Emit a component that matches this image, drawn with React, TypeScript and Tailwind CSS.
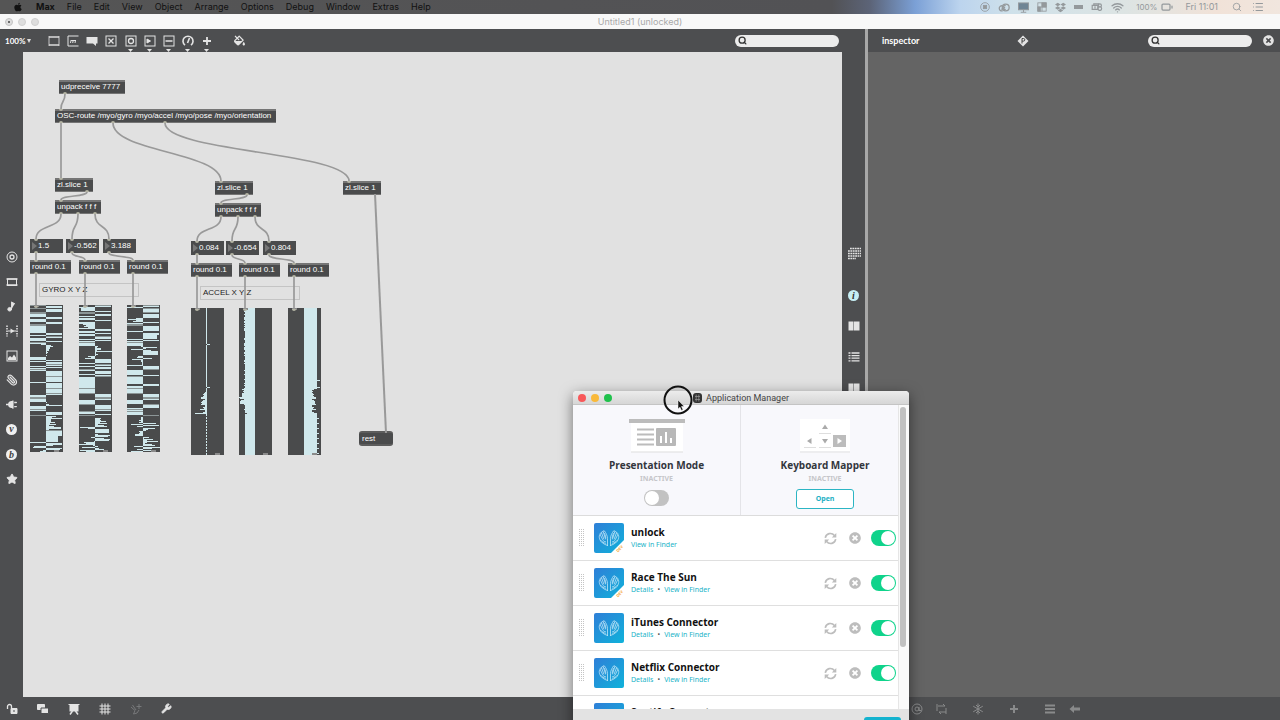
import React, { useState } from 'react';
import { Battery, List, Music2, Paperclip, Search, Star, Wifi, Wrench } from 'lucide-react';
import { FaApple, FaDropbox, FaFillDrip, FaPlug, FaTimesCircle } from 'react-icons/fa';

type IconProps = { children: React.ReactNode; label: string; arrow?: boolean };

interface PatchBox {
  text: string;
  x: number;
  y: number;
  w: number;
}

interface AppEntry {
  name: string;
  dev?: boolean;
  details?: boolean;
}

const MENUS = ['File', 'Edit', 'View', 'Object', 'Arrange', 'Options', 'Debug', 'Window', 'Extras', 'Help'];

const APPS: AppEntry[] = [
  { name: 'unlock', dev: true },
  { name: 'Race The Sun', dev: true, details: true },
  { name: 'iTunes Connector', details: true },
  { name: 'Netflix Connector', details: true },
  { name: 'Spotify Connector', details: true },
];

// Patcher objects, in canvas coordinates
const BOXES: PatchBox[] = [
  { text: 'udpreceive 7777', x: 36, y: 28, w: 66 },
  { text: 'OSC-route /myo/gyro /myo/accel /myo/pose /myo/orientation', x: 32, y: 57, w: 221 },
  { text: 'zl.slice 1', x: 32, y: 126, w: 38 },
  { text: 'unpack f f f', x: 32, y: 148, w: 46 },
  { text: 'round 0.1', x: 7, y: 208, w: 41 },
  { text: 'round 0.1', x: 56, y: 208, w: 41 },
  { text: 'round 0.1', x: 104, y: 208, w: 41 },
  { text: 'zl.slice 1', x: 192, y: 129, w: 38 },
  { text: 'unpack f f f', x: 192, y: 151, w: 46 },
  { text: 'round 0.1', x: 168, y: 211, w: 41 },
  { text: 'round 0.1', x: 216, y: 211, w: 41 },
  { text: 'round 0.1', x: 265, y: 211, w: 41 },
  { text: 'zl.slice 1', x: 320, y: 129, w: 38 },
];

const NUMBERS: PatchBox[] = [
  { text: '1.5', x: 7, y: 187, w: 33 },
  { text: '-0.562', x: 43, y: 187, w: 33 },
  { text: '3.188', x: 80, y: 187, w: 33 },
  { text: '0.084', x: 168, y: 189, w: 33 },
  { text: '-0.654', x: 203, y: 189, w: 33 },
  { text: '0.804', x: 240, y: 189, w: 33 },
];

// x1, y1, x2, y2
const CORDS: number[][] = [
  [42, 42, 38, 57],
  [38, 71, 38, 126],
  [90, 71, 198, 129],
  [142, 71, 326, 129],
  [64, 140, 38, 148],
  [38, 162, 13, 187],
  [55, 162, 49, 187],
  [72, 162, 86, 187],
  [13, 201, 13, 208],
  [49, 201, 62, 208],
  [86, 201, 110, 208],
  [13, 222, 13, 254],
  [62, 222, 62, 254],
  [110, 222, 110, 254],
  [224, 143, 198, 151],
  [198, 165, 174, 189],
  [215, 165, 209, 189],
  [232, 165, 246, 189],
  [174, 203, 174, 211],
  [209, 203, 222, 211],
  [246, 203, 271, 211],
  [174, 225, 174, 257],
  [222, 225, 222, 257],
  [271, 225, 271, 257],
];

const cordPath = ([x1, y1, x2, y2]: number[]) => {
  const d = Math.min((y2 - y1) * 0.6, 29);
  return `M${x1} ${y1} C${x1} ${y1 + d} ${x2} ${y2 - d} ${x2} ${y2}`;
};

const noise = (seed: number) => {
  const v = Math.sin(seed * 12.9898) * 43758.5453;
  return v - Math.floor(v);
};

const HISTORY = 147;

// Long runs in the gyro history: [from, to, value]
const RUNS: number[][][] = [
  [[23, 27, -16], [33, 36, -16], [40, 43, 4], [44, 52, 2], [52, 55, -16], [57, 61, 16], [63, 65, -16], [69, 77, 16], [79, 89, 16], [90, 97, -16], [97, 100, 3], [101, 106, -16], [114, 122, 5], [125, 131, 16], [131, 137, 12]],
  [[3, 6, -14], [19, 23, -8], [24, 26, 16], [37, 41, -16], [42, 46, 4], [47, 51, 5], [54, 58, 16], [64, 66, -16], [72, 89, -16], [89, 95, 16], [96, 98, -16], [101, 105, 16], [106, 109, -16], [113, 122, 6], [124, 128, 14]],
  [[4, 8, 16], [13, 17, -8], [21, 25, 16], [30, 34, 14], [36, 41, -16], [47, 50, 15], [55, 60, -4], [61, 65, 16], [66, 69, -16], [72, 79, -16], [80, 81, 16], [83, 89, -16], [89, 95, 16], [95, 98, -16], [99, 103, 16], [104, 109, -16], [111, 118, -2], [122, 126, 8], [127, 132, -5]],
];

const gyroHistory = (axis: number) =>
  Array.from({ length: HISTORY }, (_, i) => {
    const run = RUNS[axis].find(([from, to]) => i >= from && i < to);
    if (run) return Math.abs(run[2]) < 10 ? run[2] * (noise(i + axis) * 2) : run[2];
    const r = noise(i * 2.3 + axis * 17 + 5);
    const busy = i > 110 || (i > 38 && i < 55);
    if (r < 0.08) return 0;
    if (busy) return (r - 0.52) * 36;
    return r > 0.52 ? 16 : -16;
  });

const ACCEL: number[][] = [
  Array.from({ length: HISTORY }, (_, i) => {
    if (i === 36 || i === 79) return 3;
    if (i === 105) return -12;
    if (i > 83 && i < 106) return -2 - Math.floor(noise(i) * (i / 18));
    return i > 106 && i % 3 === 0 ? 0 : -1;
  }),
  Array.from({ length: HISTORY }, (_, i) => {
    if (i > 80 && i < 96) return -11 - Math.floor(noise(i) * 6);
    if (i === 105) return -8;
    if (i < 105) return noise(i) > 0.5 ? -11 : -10;
    return -10;
  }),
  Array.from({ length: HISTORY }, (_, i) => {
    if (i > 80 && i < 105) return 8 + Math.floor(noise(i) * 5);
    if (i === 72 || i === 79) return 16;
    if (i > 106 && i % 5 === 0) return 15;
    return 13;
  }),
];

const Cell: React.FC<IconProps> = ({ children, label, arrow }) => (
  <button aria-label={label} className="relative flex h-4 w-[19px] items-center justify-center text-[#e4e4e4]">
    {children}
    {arrow && (
      <svg className="absolute top-4 h-[3px] w-[5px]" viewBox="0 0 5 3">
        <path d="M0 0h5L2.500 3z" fill="currentColor" />
      </svg>
    )}
  </button>
);

const Glyph: React.FC<{ children: React.ReactNode; size?: string }> = ({ children, size = 'size-3' }) => (
  <svg viewBox="0 0 12 12" className={size} fill="none" stroke="currentColor" strokeWidth="1">
    {children}
  </svg>
);

const SearchField: React.FC<{ label: string }> = ({ label }) => (
  <label className="flex h-3 w-[104px] items-center rounded-full bg-[#ececec] pl-[3px]">
    <Search className="size-[9px] text-[#333]" strokeWidth={3.5} />
    <input type="search" aria-label={label} className="h-3 w-20 bg-transparent text-[8px] outline-none" />
  </label>
);

const MenuBar = () => (
  <header className="flex h-[14px] shrink-0 items-center justify-between bg-[linear-gradient(90deg,#555_0%,#525255_65%,#5c6478_68%,#7ba0d6_71.500%,#bcd4ee_75%,#cfe1ea_79%,#dde4e3_88%,#f1e2d8_95%,#f1e6de_100%)] pr-4 pl-[13px] font-['Inter',sans-serif] text-[9px] leading-[14px] text-[#111]">
    <nav className="flex items-center gap-3">
      <FaApple className="mr-px size-[10px]" />
      <button className="font-bold">Max</button>
      {MENUS.map((menu) => (
        <button key={menu}>{menu}</button>
      ))}
    </nav>
    <div className="flex items-center text-[#94999c]">
      <div className="flex items-center gap-2">
        <Glyph size="size-[10px]">
          <circle cx="6" cy="6" r="5.200" />
          <rect x="4" y="4" width="4" height="4" fill="currentColor" />
        </Glyph>
        <svg viewBox="0 0 14 10" className="h-[9px] w-3" fill="none" stroke="currentColor" strokeWidth="1.500">
          <circle cx="9" cy="5" r="4" />
          <path d="M9 7a2.200 2.200 0 1 1 0-4M5.500 9H4a3 3 0 1 1 1-6M4 6.500c1 1 3 0 4-2" />
        </svg>
        <Glyph size="size-[11px]">
          <rect x="0.500" y="1" width="11" height="7.500" fill="#6f8595" />
          <path d="M6 8v3M3 11.200h6" />
        </Glyph>
        <Glyph size="size-[10px]">
          <rect x="1" y="1" width="10" height="10" />
          <path d="M1 6h10M6 1v10" />
          <rect x="6" y="1" width="5" height="5" fill="currentColor" />
          <rect x="1" y="6" width="3" height="5" fill="currentColor" />
        </Glyph>
        <FaDropbox className="size-[11px]" />
        <span className="h-1 w-[9px] bg-current" />
        <svg viewBox="0 0 14 10" className="h-2 w-3" fill="none" stroke="currentColor" strokeWidth="1.500">
          <path d="M1 3h7v5H1zM3 3V1h6v2M4.500 4v3" />
          <circle cx="10.500" cy="3" r="2" />
          <circle cx="10.500" cy="7" r="2.300" />
        </svg>
        <Wifi className="size-[13px]" strokeWidth={2.5} />
      </div>
      <span className="ml-3 text-[8px]">100%</span>
      <Battery className="ml-0.5 h-3 w-4" strokeWidth={2.5} />
      <span className="ml-[10px]">Fri 11:01</span>
      <Search className="ml-[14px] size-[10px]" strokeWidth={2} />
      <List className="ml-[10px] size-3" strokeWidth={2} />
    </div>
  </header>
);

const TitleBar = () => (
  <div className="flex h-[15px] shrink-0 items-center bg-[#f8f8f8] px-[5px] font-['Inter',sans-serif]">
    <div className="flex flex-1 gap-[5px]">
      <button aria-label="Close" className="flex size-2 items-center justify-center rounded-full border border-[#c4c4c4] bg-[#dedede]">
        <span className="size-0.5 rounded-full bg-[#444]" />
      </button>
      <button aria-label="Minimize" className="size-2 rounded-full border border-[#d0d0d0] bg-[#dedede]" />
      <button aria-label="Zoom" className="size-2 rounded-full border border-[#d0d0d0] bg-[#dedede]" />
    </div>
    <h1 className="text-[9px] leading-3 text-[#a9a9a9]">Untitled1 (unlocked)</h1>
    <div className="flex-1" />
  </div>
);

const Toolbar = () => (
  <div className="flex h-[23px] shrink-0 items-center pr-[26px] pl-[5px]">
    <label className="flex w-[39px] items-center">
      <select aria-label="Zoom level" className="w-[22px] appearance-none bg-transparent font-['Lato',sans-serif] text-[8px] font-bold text-white">
        <option>100%</option>
      </select>
      <svg viewBox="0 0 4 4" className="size-1">
        <path d="M0 0h4L2 4z" fill="#ddd" />
      </svg>
    </label>
    <Cell label="Object">
      <Glyph>
        <path d="M1 1v10M11 1v10" strokeOpacity="0.800" />
        <path d="M1 2h10M1 10h10" strokeWidth="1.800" strokeOpacity="0.700" />
      </Glyph>
    </Cell>
    <Cell label="Message">
      <Glyph>
        <path d="M11.500 1H1v10h10.500" />
        <path d="M3.500 8l.6-3M5.700 8l.6-3M8 8l.6-3M4.100 5.500h4.500" />
      </Glyph>
    </Cell>
    <Cell label="Comment">
      <Glyph>
        <path d="M.5 2h11v6.500H10V11L7 8.500H.5z" fill="currentColor" stroke="none" />
      </Glyph>
    </Cell>
    <Cell label="Toggle">
      <Glyph>
        <rect x="1" y="1" width="10" height="10" />
        <path d="M3.500 3.500l5 5M8.500 3.500l-5 5" strokeWidth="1.300" />
      </Glyph>
    </Cell>
    <div className="ml-px flex">
      <Cell label="Button" arrow>
        <Glyph>
          <rect x="1" y="1" width="10" height="10" />
          <circle cx="6" cy="6" r="2.500" strokeWidth="1.300" />
        </Glyph>
      </Cell>
      <Cell label="Number" arrow>
        <Glyph>
          <rect x="1" y="1" width="10" height="10" />
          <path d="M3 4l3.500 2L3 8z" fill="currentColor" />
        </Glyph>
      </Cell>
      <Cell label="Slider" arrow>
        <Glyph>
          <rect x="1" y="1" width="10" height="10" />
          <path d="M2.500 6h7" strokeWidth="1.500" />
        </Glyph>
      </Cell>
      <Cell label="Dial" arrow>
        <Glyph>
          <path d="M3 10.200a5 5 0 1 1 6 0M5.500 8l2-5" strokeWidth="1.600" />
        </Glyph>
      </Cell>
      <Cell label="Add" arrow>
        <Glyph>
          <path d="M6 2v8M2 6h8" strokeWidth="1.800" />
        </Glyph>
      </Cell>
    </div>
    <div className="ml-[14px]">
      <Cell label="Fill colour">
        <FaFillDrip className="size-[11px]" />
      </Cell>
    </div>
    <div className="flex-1" />
    <SearchField label="Search patcher" />
  </div>
);

const LeftRail = () => (
  <nav className="mt-[197px] flex h-[238px] w-[23px] shrink-0 flex-col items-center justify-between">
    <Cell label="Objects">
      <Glyph>
        <circle cx="6" cy="6" r="5" />
        <circle cx="6" cy="6" r="2" strokeWidth="1.300" />
      </Glyph>
    </Cell>
    <Cell label="Modules">
      <Glyph>
        <rect x="1.500" y="3" width="9" height="6.500" />
        <path d="M.5 3h11M.5 9h11" strokeWidth="1.600" />
      </Glyph>
    </Cell>
    <Cell label="Audio">
      <Music2 className="size-[11px]" fill="currentColor" />
    </Cell>
    <Cell label="Video">
      <Glyph>
        <path d="M1 .5v11M11 .5v11" strokeWidth="1.500" strokeDasharray="1.500 1" />
        <path d="M4.500 3.500L8.500 6l-4 2.500z" fill="currentColor" stroke="none" />
        <path d="M2 6h8" />
      </Glyph>
    </Cell>
    <Cell label="Images">
      <Glyph>
        <rect x="1" y="1" width="10" height="10" />
        <path d="M2 10V8l2-2 2 1.500L8 4.500l2 3V10z" fill="currentColor" stroke="none" />
      </Glyph>
    </Cell>
    <Cell label="Clippings">
      <Paperclip className="size-3 -scale-x-100" strokeWidth={2.5} />
    </Cell>
    <Cell label="Plug-ins">
      <FaPlug className="size-[11px] rotate-90" />
    </Cell>
    <Cell label="Vizzie">
      <span className="size-[11px] rounded-full bg-[#f0f0f0] text-center font-['Liberation_Serif',serif] text-[10px] leading-[10px] font-bold text-[#444] italic">v</span>
    </Cell>
    <Cell label="Beap">
      <span className="size-[11px] rounded-full bg-[#f0f0f0] text-center font-['Liberation_Serif',serif] text-[10px] leading-[11px] font-bold text-[#444] italic">b</span>
    </Cell>
    <Cell label="Favourites">
      <Star className="size-3" fill="currentColor" />
    </Cell>
  </nav>
);

const BookIcon = () => (
  <Glyph>
    <path d="M.5 1.500h5v9h-5zM6 1.500h5.500v9H6z" fill="currentColor" stroke="none" />
  </Glyph>
);

const RightRail = () => (
  <nav className="flex w-[23px] shrink-0 flex-col items-center gap-[15px] pt-[194px]">
    <div className="mb-[10px]">
      <Cell label="Matrix">
        <svg viewBox="0 0 14 14" className="size-[14px]" stroke="currentColor" strokeWidth="1.700" strokeDasharray="1.800 0.600">
          <path d="M3 1.500h11M1 4h13M1 6.500h13M1 9h13M1 11.500h8" />
        </svg>
      </Cell>
    </div>
    <Cell label="Inspector">
      <span className="size-[11px] rounded-full bg-[#c6eff5] text-center font-['Liberation_Serif',serif] text-[10px] leading-[11px] font-bold text-[#333] italic">i</span>
    </Cell>
    <Cell label="Reference">
      <BookIcon />
    </Cell>
    <Cell label="Console">
      <Glyph>
        <path d="M.5 2h2M3.500 2h8M.5 4.600h2M3.500 4.600h8M.5 7.200h2M3.500 7.200h8M.5 9.800h2M3.500 9.800h8" strokeWidth="1.300" />
      </Glyph>
    </Cell>
    <Cell label="Lessons">
      <BookIcon />
    </Cell>
  </nav>
);

const MultiSlider: React.FC<{ values: number[]; x: string }> = ({ values, x }) => (
  <svg className={`absolute h-[147px] w-[33px] ${x}`} viewBox="0 0 33 147" shapeRendering="crispEdges">
    <rect width="33" height="147" fill="#4a4b4c" />
    {values.map((v, i) => (
      <rect
        key={i}
        x={v < 0 ? 16 + v : 16}
        y={i}
        width={Math.abs(v)}
        height="1"
        fill={noise(i * 5 + 1) > 0.85 && Math.abs(v) === 16 ? '#8c9697' : '#d0e8ec'}
      />
    ))}
    <path d="M4 0h5v2H4zM24 145h5v2h-5z" fill="#8a8a8a" />
  </svg>
);

// The canvas is free-form: every object sits where the user dropped it
const PatcherCanvas = () => (
  <main className="relative min-w-0 flex-1 overflow-hidden bg-[#e1e1e1] font-['Liberation_Sans',sans-serif] text-[8px] leading-[10px]">
    <MultiSlider values={gyroHistory(0)} x="left-[7px] top-[253px]" />
    <MultiSlider values={gyroHistory(1)} x="left-[56px] top-[253px]" />
    <MultiSlider values={gyroHistory(2)} x="left-[104px] top-[253px]" />
    <MultiSlider values={ACCEL[0]} x="left-[168px] top-[256px]" />
    <MultiSlider values={ACCEL[1]} x="left-[216px] top-[256px]" />
    <MultiSlider values={ACCEL[2]} x="left-[265px] top-[256px]" />
    <p className="absolute top-[231px] left-4 h-[14px] w-[100px] border border-[#c4c4c4] px-0.5 py-px text-[#222]">GYRO X Y Z</p>
    <p className="absolute top-[234px] left-[177px] h-[14px] w-[100px] border border-[#c4c4c4] px-0.5 py-px text-[#222]">ACCEL X Y Z</p>
    {BOXES.map((box) => (
      <div
        key={`${box.x}-${box.y}`}
        className="absolute h-[14px] border-t-2 border-b border-[#757575] bg-[#4a4b4c] pl-0.5 whitespace-nowrap text-white"
        style={{ left: box.x, top: box.y, width: box.w }}
      >
        {box.text}
      </div>
    ))}
    {NUMBERS.map((box) => (
      <div
        key={`${box.x}-${box.y}`}
        className="absolute flex h-[14px] items-center bg-[#4a4b4c] pl-0.5"
        style={{ left: box.x, top: box.y, width: box.w }}
      >
        <svg viewBox="0 0 5 8" className="h-2 w-[5px] shrink-0">
          <path d="M0 0l5 4-5 4z" fill="#777" />
        </svg>
        <input aria-label="Number" defaultValue={box.text} className="w-[25px] bg-transparent pl-px text-[8px] leading-[10px] text-white outline-none" />
      </div>
    ))}
    <button className="absolute top-[379px] left-[336px] h-[15px] w-[34px] rounded-[3px] border-y-2 border-[#5c5c5c] bg-[#4a4b4c] pl-[3px] text-left text-white">
      rest
    </button>
    <svg className="pointer-events-none absolute inset-0 size-full" fill="none">
      {CORDS.map((cord) => (
        <path key={cord.join()} d={cordPath(cord)} stroke="#999" strokeWidth="1.700" />
      ))}
      <path d="M352 142L363 381" stroke="#999" strokeWidth="2" />
      {CORDS.map(([x1, y1, x2, y2]) => (
        <path key={`${x1}-${y1}-${x2}`} d={`M${x1 - 2} ${y1}a2 2 0 0 1 4 0M${x2 - 2} ${y2}a2 2 0 0 0 4 0`} fill="#b5b5a5" />
      ))}
    </svg>
  </main>
);

const PatcherFooter = () => (
  <footer className="flex h-[23px] shrink-0 items-center gap-3 pl-0.5">
    <Cell label="Unlock">
      <Glyph>
        <path d="M5 5.500h6v5H5z" fill="currentColor" />
        <path d="M1.500 6V3.500a2 2 0 0 1 4 0V5" strokeWidth="1.300" />
        <path d="M8 7v2" stroke="#4d4e50" />
      </Glyph>
    </Cell>
    <Cell label="Patching mode">
      <Glyph>
        <path d="M.5 1.500h7v5h-7z" fill="currentColor" />
        <path d="M4 5h7.500v5.500H4z" fill="currentColor" stroke="#4d4e50" />
      </Glyph>
    </Cell>
    <Cell label="Presentation">
      <Glyph>
        <path d="M.5 1h11v1h-1v6.500h-9V2h-1z" fill="currentColor" stroke="none" />
        <path d="M4.500 8L2 11.500M7.500 8L10 11.500" strokeWidth="1.500" />
      </Glyph>
    </Cell>
    <Cell label="Grid">
      <Glyph>
        <path d="M3 .5v11M6 .5v11M9 .5v11M.5 3h11M.5 6h11M.5 9h11" />
      </Glyph>
    </Cell>
    <Cell label="Snap">
      <Glyph>
        <path d="M1 4l4 3.500M2.500 2l3.500 5M5 7.500L3.500 11 7 10l2-3M9 1v5M6.500 3.500h5" stroke="#77787a" />
      </Glyph>
    </Cell>
    <Cell label="Tools">
      <Wrench className="size-[11px]" fill="currentColor" />
    </Cell>
  </footer>
);

const Inspector = () => (
  <aside className="flex w-[412px] shrink-0 flex-col bg-[#646464]">
    <div className="flex h-[23px] items-center bg-[#4d4e50] pr-0.5 pl-[14px]">
      <h2 className="w-[131px] font-['Lato',sans-serif] text-[9px] leading-3 font-bold text-white">inspector</h2>
      <Cell label="Parameters">
        <Glyph>
          <path d="M6 .5L11.500 6 6 11.500.5 6z" fill="currentColor" stroke="none" />
          <path d="M5 8.500v-5h1.500a1.300 1.300 0 0 1 0 2.600H5" stroke="#444" />
        </Glyph>
      </Cell>
      <div className="flex-1" />
      <SearchField label="Search inspector" />
      <div className="ml-[7px]">
        <Cell label="Close inspector">
          <FaTimesCircle className="size-[11px]" />
        </Cell>
      </div>
    </div>
    <div className="flex-1" />
    <footer className="flex h-[23px] items-center bg-[#4d4e50] pl-[39px]">
      <div className="flex gap-[17px] opacity-40">
        <Cell label="Attribute">
          <Glyph>
            <circle cx="6" cy="6" r="5" />
            <circle cx="6" cy="6" r="2" />
            <path d="M8 4v3.500h2" />
          </Glyph>
        </Cell>
        <div className="-ml-[11px]">
          <Cell label="Reorder">
            <Glyph>
              <path d="M1 1v7M2 3h7L7 1M10 5v6M10 9H3l2 2" />
            </Glyph>
          </Cell>
        </div>
        <Cell label="Freeze">
          <Glyph>
            <path d="M6 .5v11M1.200 3.200l9.600 5.600M10.800 3.200L1.200 8.800M4 2l2 2 2-2M4 10l2-2 2 2" />
          </Glyph>
        </Cell>
        <Cell label="Add attribute">
          <Glyph>
            <path d="M6 2v8M2 6h8" strokeWidth="2" />
          </Glyph>
        </Cell>
        <Cell label="Show list">
          <Glyph>
            <path d="M1 2.500h10M1 6h10M1 9.500h10" strokeWidth="1.800" />
          </Glyph>
        </Cell>
        <div className="-ml-[11px]">
          <Cell label="Back">
            <Glyph>
              <path d="M.5 6L5 2v2.500h6v3H5V10z" fill="currentColor" stroke="none" />
            </Glyph>
          </Cell>
        </div>
      </div>
    </footer>
  </aside>
);

const Switch: React.FC<{ label: string; on?: boolean }> = ({ label, on = false }) => {
  const [checked, setChecked] = useState(on);
  return (
    <input
      type="checkbox"
      role="switch"
      aria-label={label}
      checked={checked}
      onChange={() => setChecked(!checked)}
      className="relative h-4 w-[25px] shrink-0 appearance-none rounded-full bg-[#c2c2c2] before:absolute before:top-px before:left-px before:size-[14px] before:rounded-full before:bg-white checked:bg-[#0fd38b] checked:before:left-[10px]"
    />
  );
};

const AppTile: React.FC<{ dev?: boolean; id: number }> = ({ dev, id }) => (
  <svg viewBox="0 0 30 30" className="size-[30px] shrink-0">
    <defs>
      <linearGradient id={`tile-${id}`} x1="0" y1="0" x2="1" y2="1">
        <stop offset="0" stopColor="#2f7fd8" />
        <stop offset="1" stopColor="#0fb2da" />
      </linearGradient>
    </defs>
    <path
      d={dev ? 'M2 0h26a2 2 0 0 1 2 2v15L17 30H2a2 2 0 0 1-2-2V2a2 2 0 0 1 2-2z' : 'M2 0h26a2 2 0 0 1 2 2v26a2 2 0 0 1-2 2H2a2 2 0 0 1-2-2V2a2 2 0 0 1 2-2z'}
      fill={`url(#tile-${id})`}
    />
    <g fill="none" stroke="#d4effb" strokeWidth="0.700" strokeLinecap="round">
      <path
        id={`wing-${id}`}
        d="M13.500 22.500V15.500c0-3-1.700-5.500-3-7.500-.7-.8-1.600-.2-1.300.6l2 6.400M9 8.800c-.9-.5-1.700 0-1.500.9l2.300 6.300M7.400 10c-1-.2-1.600.5-1.300 1.400l2.500 5.100M6 11.500c-1 .7-.9 2.700-.4 4.300.9 3.500 4 5.300 7.900 6.700M7 17.500c1 1.500 2.800 2.500 4.500 2.800M9 17.500c.5.700 1.500 1.200 2.500 1.300M10.500 10.500c1 2 1.300 3.500 1.200 5.500"
      />
      <use href={`#wing-${id}`} transform="translate(30 0) scale(-1 1)" />
    </g>
    {dev && (
      <text x="26" y="27" fontSize="4" fontWeight="700" fill="#f5a93c" textAnchor="middle" transform="rotate(-45 26 26)">
        DEV
      </text>
    )}
  </svg>
);

const AppRow: React.FC<{ app: AppEntry; id: number }> = ({ app, id }) => (
  <li className="flex h-[45px] items-center border-b border-[#dfdfdf] pr-0.5 pl-1.5">
    <svg viewBox="0 0 6 18" className="mr-[9px] h-[18px] w-1.5 shrink-0" stroke="#c4c4c4" strokeDasharray="1 1" shapeRendering="crispEdges">
      <path d="M.5 0v18M2.500 0v18M4.500 0v18" />
    </svg>
    <AppTile dev={app.dev} id={id} />
    <div className="ml-[7px] min-w-0 flex-1 pt-0.5">
      <h3 className="text-[10px] leading-3 font-bold text-[#111]">{app.name}</h3>
      <p className="flex gap-1 font-['Noto_Sans',sans-serif] text-[7px] leading-[14px] text-[#22b3c8]">
        {app.details && (
          <>
            <a href="#details">Details</a>
            <span className="text-[#555]">•</span>
          </>
        )}
        <a href="#finder">View in Finder</a>
      </p>
    </div>
    <button aria-label={`Reload ${app.name}`} className="mr-3 text-[#bdbdbd]">
      <svg viewBox="0 0 13 13" className="size-[13px]" fill="none" stroke="currentColor" strokeWidth="1.600">
        <path d="M1.300 5.800A5.100 5.100 0 0 1 10.400 3.500M11.700 7.200A5.100 5.100 0 0 1 2.600 9.500" />
        <path d="M12.300 1v4.500H7.800zM.7 12V7.500h4.500z" fill="currentColor" stroke="none" />
      </svg>
    </button>
    <button aria-label={`Remove ${app.name}`} className="mr-[10px] text-[#bdbdbd]">
      <FaTimesCircle className="size-3" />
    </button>
    <Switch label={`Enable ${app.name}`} on />
  </li>
);

const ApplicationManager = () => (
  <section className="absolute top-[391px] left-[573px] w-[336px] overflow-hidden rounded-t bg-white font-['Open_Sans',sans-serif] shadow-[0_4px_14px_rgba(0,0,0,0.5)]">
    <div className="flex h-[14px] items-center border-b border-[#c4c4c4] bg-linear-to-b from-[#ececec] to-[#d6d6d6] px-[5px]">
      <div className="flex flex-1 gap-[5px]">
        <button aria-label="Close window" className="size-2 rounded-full bg-[#f8585a]" />
        <button aria-label="Minimize window" className="size-2 rounded-full bg-[#f9b93a]" />
        <button aria-label="Zoom window" className="size-2 rounded-full bg-[#1fc14c]" />
      </div>
      <h2 className="flex items-center gap-1 font-['Roboto',sans-serif] text-[9px] leading-3 text-[#444]">
        <svg viewBox="0 0 9 10" className="h-[10px] w-[9px]">
          <rect width="9" height="10" rx="3" fill="#333" />
          <path d="M2 3.500h5M2 6.500h5M3.200 1.500v7M5.800 1.500v7" stroke="#999" strokeWidth="0.700" />
        </svg>
        Application Manager
      </h2>
      <div className="flex-1" />
    </div>
    <div className="relative">
      <div className="grid h-[111px] grid-cols-2 border-b border-[#dcdcdc] bg-[#f8f8fc] text-center">
        <div className="flex flex-col items-center border-r border-[#e4e4e8] pt-[14px]">
          <svg viewBox="0 0 56 34" className="h-[34px] w-14">
            <path d="M2 4h52v29H2z" fill="#fff" />
            <path d="M2 33h52" stroke="#ddd" />
            <rect width="56" height="4" fill="#bcbcbc" />
            <path d="M8 10.500h17M8 15.500h17M8 20.500h17M8 25.500h17" stroke="#bcbcbc" strokeWidth="1.800" />
            <rect x="27" y="9" width="20" height="18" rx="1" fill="#b8b8b8" />
            <path d="M32 24v-7M37 24V13M42 24v-5" stroke="#fff" strokeWidth="2" />
          </svg>
          <h3 className="mt-[5px] text-[10px] leading-[14px] font-bold text-[#33363d]">Presentation Mode</h3>
          <p className="mb-[5px] font-['Noto_Sans',sans-serif] text-[7px] leading-[13px] font-bold text-[#c6c6ca]">INACTIVE</p>
          <Switch label="Presentation Mode" />
        </div>
        <div className="flex flex-col items-center pt-[14px]">
          <svg viewBox="0 0 56 34" className="h-[34px] w-14">
            <path d="M3 0h50v32H3z" fill="#fff" />
            <path d="M3 33h50" stroke="#e2e2e2" />
            <path d="M22 14.500h12M7 28.500h12M22 28.500h12" stroke="#dedede" />
            <rect x="36" y="16" width="13" height="12" fill="#bcbcbc" />
            <path d="M28 5.500l3 4.500h-6zM28 24.500l3-4.500h-6zM10 22l4.500-3v6z" fill="#aaa" />
            <path d="M45 22l-4.500-3v6z" fill="#fff" />
          </svg>
          <h3 className="mt-[5px] text-[10px] leading-[14px] font-bold text-[#33363d]">Keyboard Mapper</h3>
          <p className="mb-1 font-['Noto_Sans',sans-serif] text-[7px] leading-[13px] font-bold text-[#c6c6ca]">INACTIVE</p>
          <button className="h-5 w-[58px] rounded-[3px] border border-[#2cb5c4] bg-white text-[7px] leading-3 font-bold text-[#22b0c4]">
            Open
          </button>
        </div>
      </div>
      <ul className="mr-[11px] h-[193px] overflow-hidden">
        {APPS.map((app, i) => (
          <AppRow key={app.name} app={app} id={i} />
        ))}
      </ul>
      {/* Overlay scrollbar */}
      <div className="absolute inset-y-0 right-0 w-[11px] border-l border-[#e6e6e6] bg-[#fafafa] pt-0.5 pl-px">
        <div className="h-[240px] w-1.5 rounded-full bg-[#c1c1c1]" />
      </div>
    </div>
    <div className="flex h-[30px] justify-end bg-[#e3e3e3] pt-2 pr-2">
      <button aria-label="Done" className="h-5 w-[37px] rounded-[3px] bg-[#14b3cf]" />
    </div>
  </section>
);

export default function App() {
  return (
    <div className="relative flex h-screen flex-col overflow-hidden bg-[#4d4e50]">
      <MenuBar />
      <TitleBar />
      <div className="flex min-h-0 flex-1">
        <div className="flex min-w-0 flex-1 flex-col">
          <Toolbar />
          <div className="flex min-h-0 flex-1">
            <LeftRail />
            <PatcherCanvas />
            <RightRail />
          </div>
          <PatcherFooter />
        </div>
        <div className="w-[3px] shrink-0 bg-[#a8a8a8]" />
        <Inspector />
      </div>
      <ApplicationManager />

      {/* Pointer with click halo */}
      <svg viewBox="0 0 30 30" className="pointer-events-none absolute top-[385px] left-[663px] size-[30px]">
        <circle cx="15" cy="15" r="13.500" fill="none" stroke="#111" strokeWidth="2" />
        <path d="M15 15v9l2-1.800 1.500 3.300 1.500-.8-1.500-3.200h2.700z" fill="#111" stroke="#fff" strokeWidth="0.500" />
      </svg>
    </div>
  );
}
